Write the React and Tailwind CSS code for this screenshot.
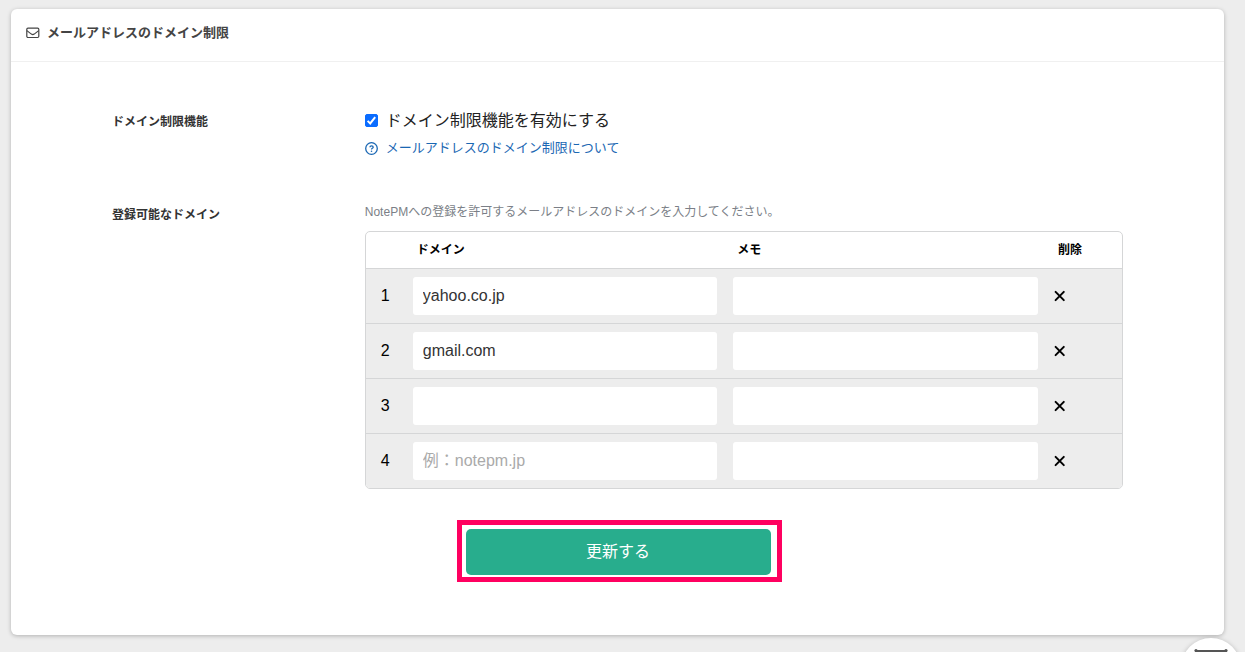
import { useState } from "react";

const INITIAL_ROWS = [
  { id: 1, domain: "yahoo.co.jp", memo: "" },
  { id: 2, domain: "gmail.com", memo: "" },
  { id: 3, domain: "", memo: "" },
  { id: 4, domain: "", memo: "", placeholder: "例：notepm.jp" },
];

const INPUT_CLASS =
  "block h-[38px] w-full rounded-[3px] bg-white px-2.5 text-base text-[#333] placeholder:text-[#aaa] outline-none focus:ring-1 focus:ring-[#28ad8d]";

function MailIcon() {
  return (
    <svg className="h-3.5 w-3.5 shrink-0" viewBox="0 0 14 14" fill="none" stroke="#444" strokeWidth="1.2" aria-hidden="true">
      <rect x="0.8" y="2.1" width="12" height="9.4" rx="1.2" />
      <path d="M0.9 4.6 L5.4 8.1 Q6.8 9.1 8.2 8.1 L12.7 4.6" />
    </svg>
  );
}

function HelpIcon() {
  return (
    <svg className="h-[13px] w-[13px] shrink-0" viewBox="0 0 13 13" fill="none" stroke="currentColor" strokeWidth="1.3" aria-hidden="true">
      <circle cx="6.5" cy="6.5" r="5.8" />
      <path d="M4.9 5.2 C5 3.4 8.2 3.4 8.2 5.2 C8.2 6.3 6.5 6.2 6.5 7.5" />
      <circle cx="6.5" cy="9.3" r="0.8" fill="currentColor" stroke="none" />
    </svg>
  );
}

function CloseIcon() {
  return (
    <svg className="h-3 w-3" viewBox="0 0 12 12" stroke="#000" strokeWidth="2" strokeLinecap="round" aria-hidden="true">
      <path d="M1.6 1.9 L9.8 10.1 M9.8 1.9 L1.6 10.1" />
    </svg>
  );
}

function CheckBox({ checked, onChange, id }) {
  return (
    <span className="relative block h-[13px] w-[13px] shrink-0">
      <input
        id={id}
        type="checkbox"
        checked={checked}
        onChange={onChange}
        className="block h-[13px] w-[13px] appearance-none rounded-[2px] border border-[#767676] bg-white checked:border-[#0a6cff] checked:bg-[#0a6cff]"
      />
      {checked && (
        <svg className="pointer-events-none absolute inset-0" viewBox="0 0 13 13" fill="none" stroke="#fff" strokeWidth="2" aria-hidden="true">
          <path d="M2.6 6.9 L5.2 9.4 L10.2 3.2" />
        </svg>
      )}
    </span>
  );
}

export default function App() {
  const [enabled, setEnabled] = useState(true);
  const [rows, setRows] = useState(INITIAL_ROWS);

  const update = (id, key, value) =>
    setRows(rows.map((row) => (row.id === id ? { ...row, [key]: value } : row)));

  const remove = (id) => setRows(rows.filter((row) => row.id !== id));

  return (
    <div className="min-h-screen bg-[#ededed] pt-[9px] pr-[21px] pb-[17px] pl-[11px] font-['Liberation_Sans','Noto_Sans_CJK_JP',sans-serif]">
      <section className="rounded-md bg-white shadow-[0_1px_4px_rgba(0,0,0,0.25)]">
        <header className="flex items-center gap-[7px] border-b border-[#f0f0f0] px-[15px] pt-3.5 pb-[18px]">
          <MailIcon />
          <h1 className="text-[13px] leading-5 font-bold text-[#444]">メールアドレスのドメイン制限</h1>
        </header>

        <form className="px-[8.333%] pt-[47px] pb-[53px]" onSubmit={(e) => e.preventDefault()}>
          <div className="flex">
            <div className="w-1/4 text-xs leading-[26px] font-bold text-[#333]">ドメイン制限機能</div>
            <div className="w-3/4">
              <div className="flex items-start gap-2">
                <span className="py-[5px]">
                  <CheckBox id="enabled" checked={enabled} onChange={(e) => setEnabled(e.target.checked)} />
                </span>
                <label htmlFor="enabled" className="text-base leading-6 text-[#222]">
                  ドメイン制限機能を有効にする
                </label>
              </div>
              <a href="#help" className="mt-[5px] flex items-center gap-2 text-[13px] leading-5 text-[#1a67b3]">
                <HelpIcon />
                メールアドレスのドメイン制限について
              </a>
            </div>
          </div>

          <div className="mt-11 flex">
            <div className="w-1/4 text-xs leading-[26px] font-bold text-[#333]">登録可能なドメイン</div>
            <div className="w-3/4">
              <p className="text-xs leading-5 text-[#7b7f87]">
                NotePMへの登録を許可するメールアドレスのドメインを入力してください。
              </p>
              <div className="mt-[9px] overflow-hidden rounded-[5px] border border-[#d5d6d7]">
                <table className="w-full table-fixed text-black">
                  <colgroup>
                    <col className="w-[39px]" />
                    <col />
                    <col />
                    <col className="w-[76px]" />
                  </colgroup>
                  <thead>
                    <tr className="h-9 text-left text-xs">
                      <td />
                      <th className="px-3 font-bold">ドメイン</th>
                      <th className="px-3 font-bold">メモ</th>
                      <th className="px-3 font-bold">削除</th>
                    </tr>
                  </thead>
                  <tbody>
                    {rows.map((row, i) => (
                      <tr key={row.id} className="border-t border-[#d5d6d7] bg-[#ededed]">
                        <td className="text-center text-base">{i + 1}</td>
                        <td className="p-2">
                          <input
                            type="text"
                            aria-label="ドメイン"
                            className={INPUT_CLASS}
                            value={row.domain}
                            placeholder={row.placeholder}
                            onChange={(e) => update(row.id, "domain", e.target.value)}
                          />
                        </td>
                        <td className="p-2">
                          <input
                            type="text"
                            aria-label="メモ"
                            className={INPUT_CLASS}
                            value={row.memo}
                            onChange={(e) => update(row.id, "memo", e.target.value)}
                          />
                        </td>
                        <td className="px-2">
                          <button type="button" aria-label="削除" className="block cursor-pointer" onClick={() => remove(row.id)}>
                            <CloseIcon />
                          </button>
                        </td>
                      </tr>
                    ))}
                  </tbody>
                </table>
              </div>
            </div>
          </div>

          <div className="mt-[31px] flex justify-center pl-[3px]">
            <div className="w-full max-w-[325px] border-5 border-[#ff0060] pt-1 pr-[6px] pb-[2px] pl-1">
              <button type="submit" className="block h-[46px] w-full cursor-pointer rounded-[5px] bg-[#28ad8d] text-base text-white">
                更新する
              </button>
            </div>
          </div>
        </form>
      </section>

      <button
        type="button"
        aria-label="チャット"
        className="fixed right-1 -bottom-[46px] h-[60px] w-[60px] rounded-full bg-white shadow-[0_1px_5px_rgba(0,0,0,0.25)]"
      >
        <svg className="absolute top-2.5 left-[13px] h-8 w-[34px]" viewBox="0 0 34 32" fill="none" stroke="#555" strokeWidth="2" aria-hidden="true">
          <path d="M2 3 H32 V26 H2 Z" />
          <path d="M2 3 L17 16 L32 3" />
          <circle cx="2" cy="2.6" r="1.6" fill="#555" stroke="none" />
          <circle cx="32" cy="2.6" r="1.6" fill="#555" stroke="none" />
        </svg>
      </button>
    </div>
  );
}
